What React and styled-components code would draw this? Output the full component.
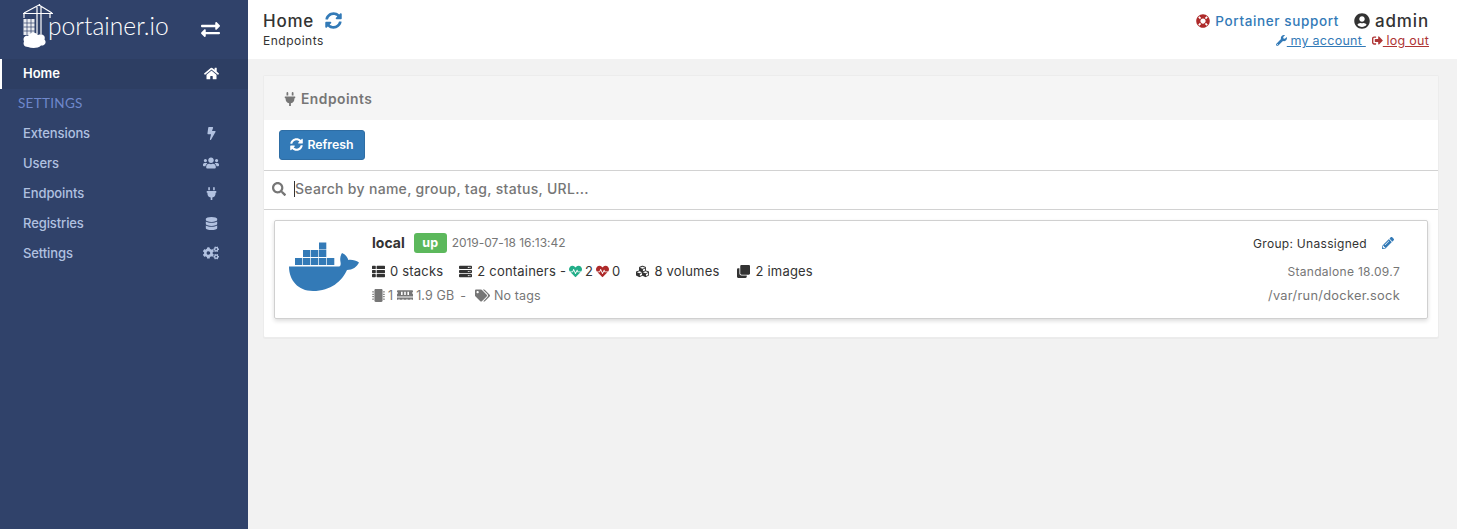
import React from 'react';
import styled, { createGlobalStyle } from 'styled-components';
import {
  FaHome, FaBolt, FaUsers, FaPlug, FaDatabase, FaCogs, FaSyncAlt, FaSearch, FaExchangeAlt,
  FaLifeRing, FaUserCircle, FaWrench, FaSignOutAlt, FaThList, FaServer, FaHeartbeat,
  FaCubes, FaClone, FaMicrochip, FaMemory, FaTags, FaPencilAlt,
} from 'react-icons/fa';

const FONT = `"Inter", "Open Sans", "Liberation Sans", sans-serif`;

const Global = createGlobalStyle`
  html, body { margin: 0; padding: 0; height: 100%; background: #f2f2f2; overflow: hidden; }
  body { font-family: ${FONT}; font-size: 13px; color: #333; }
  * { box-sizing: border-box; }
`;

const Page = styled.div`display: flex; width: 1457px; height: 529px;`;

const Sidebar = styled.aside`width: 248px; height: 100%; background: #30426a; flex: none;`;
const Brand = styled.div`
  height: 59px; display: flex; align-items: flex-start; padding-left: 22px; position: relative; color: #fff;
`;
const LogoWord = styled.span`
  font-family: "Lato", sans-serif; font-weight: 300; font-size: 24.6px; line-height: 28px;
  color: #fff; margin: 12px 0 0 -6px;
`;
const Swap = styled.span`margin: 20px 0 0 0; position: absolute; left: 201px; display: flex; font-size: 19px;`;
const NavRow = styled.div`
  height: 30px; display: flex; align-items: center; justify-content: space-between;
  padding: 0 29px 2px ${p => (p.$active ? 21 : 23)}px;
  font-size: 13px; font-weight: ${p => (p.$active ? 600 : 500)};
  letter-spacing: ${p => (p.$active ? '0' : '-.1px')};
  color: ${p => (p.$active ? '#fff' : '#b1c1e0')};
  background: ${p => (p.$active ? '#2d3e63' : 'transparent')};
  border-left: ${p => (p.$active ? '2px solid #fff' : 'none')};
`;
const NavIcon = styled.span`display: flex; width: 16px; justify-content: center; font-size: 15px;`;
const NavTitle = styled.div`
  height: 30px; display: flex; align-items: center; padding: 0 0 2px 18px;
  font-family: "Lato", sans-serif; font-size: 13.5px; color: #6f88cc; letter-spacing: .3px;
`;

const Main = styled.main`flex: 1; min-width: 0;`;
const Header = styled.header`
  height: 59px; background: #fff; display: flex; justify-content: space-between;
  padding: 10px 28px 0 15px;
`;
const TitleLine = styled.div`
  display: flex; align-items: center; gap: 11px; font-size: 17px; font-weight: 500; color: #333; height: 21px; letter-spacing: .75px;
`;
const Crumb = styled.div`font-size: 12px; color: #333; margin-top: 2px; line-height: 16px; letter-spacing: .5px;`;
const Right = styled.div`display: flex; flex-direction: column; align-items: flex-end;`;
const RightTop = styled.div`display: flex; align-items: center; height: 21px; gap: 15px;`;
const Support = styled.span`
  display: flex; align-items: center; gap: 5px; color: #337ab7; font-size: 13.5px; font-weight: 500; letter-spacing: .62px;
`;
const Admin = styled.span`display: flex; align-items: center; gap: 5px; font-size: 17px; font-weight: 500; color: #333; letter-spacing: .85px;`;
const RightBottom = styled.div`display: flex; gap: 6px; font-size: 12.5px; margin-top: 2px; line-height: 15px; letter-spacing: .25px;`;
const Lnk = styled.span`
  color: ${p => p.$c}; text-decoration: underline; display: inline-flex; align-items: center; white-space: pre;
`;

const Content = styled.div`padding: 16px 18px 0 15px;`;
const Panel = styled.section`
  height: 263px; background: #fff; border: 1px solid #ececec; border-radius: 2px; box-shadow: 0 1px 1px rgba(0,0,0,.03);
`;
const PanelHead = styled.div`
  height: 44px; background: #f5f5f5; display: flex; align-items: center; gap: 4px;
  padding: 2px 0 0 19px; color: #767676; font-size: 13.8px; font-weight: 600; letter-spacing: .5px;
`;
const Actions = styled.div`height: 51px; padding-top: 10px; border-bottom: 1px solid #d2d2d2;`;
const RefreshBtn = styled.button`
  margin-left: 15px; width: 86px; height: 30px; background: #337ab7; border: 1px solid #2e6da4; border-radius: 3px;
  color: #fff; font: 600 12.3px ${FONT}; display: inline-flex; align-items: center; justify-content: center; gap: 4px; padding: 0 0 2px;
`;
const SearchRow = styled.div`
  height: 39px; border-bottom: 1px solid #d2d2d2; display: flex; align-items: center; padding: 0 0 3px 8px;
  color: #767676; font-size: 14px; font-weight: 500; letter-spacing: .3px;
`;
const Caret = styled.span`width: 1px; height: 16px; background: #333; margin: 0 0 0 8px;`;
const Card = styled.article`
  margin: 10px 10px 0 10px; height: 99px; border: 1px solid #d0d0d0; border-radius: 2px;
  box-shadow: 0 2px 4px rgba(0,0,0,.14); display: flex; padding-left: 14px;
`;
const Whale = styled.div`width: 71px; margin-right: 12px; padding-top: 21px; flex: none;`;
const Info = styled.div`flex: 1; display: flex; flex-direction: column;`;
const Line = styled.div`display: flex; align-items: center; height: ${p => p.$h}px; margin-top: ${p => p.$mt || 0}px; font-size: ${p => p.$s || 13}px; color: ${p => p.$c || '#333'}; letter-spacing: ${p => p.$ls ?? 0.2}px;`;
const Name = styled.span`font-size: 14px; font-weight: 700; color: #333; letter-spacing: 0; margin-top: -2px;`;
const Badge = styled.span`
  margin: 0 5px 0 9px; width: 33px; height: 20px; background: #5cb85c; border-radius: 3px; color: #fff;
  font-size: 12.5px; font-weight: 700; display: flex; align-items: center; justify-content: center; padding-bottom: 1px;
`;
const Stamp = styled.span`color: #767676; font-size: 12px; letter-spacing: -.05px; margin-top: -1px;`;
const Stat = styled.span`display: inline-flex; align-items: center; gap: ${p => p.$g ?? 5}px; margin-left: ${p => p.$ml || 0}px; white-space: pre;`;
const Side = styled.div`width: 172px; margin-right: 27px; display: flex; flex-direction: column; align-items: flex-end; flex: none;`;
const SideLine = styled.div`height: ${p => p.$h}px; margin-top: ${p => p.$mt || 0}px; display: flex; align-items: center; font-size: ${p => p.$s || 12}px; color: ${p => p.$c}; letter-spacing: .3px; white-space: pre;`;

const DockerWhale = () => (
  <svg width="71" height="52" viewBox="0 0 71 52">
    <g fill="#337ab7">
      <rect x="6" y="16" width="7.3" height="7" /><rect x="14" y="16" width="7.3" height="7" /><rect x="22" y="16" width="7.3" height="7" /><rect x="30" y="16" width="7.3" height="7" /><rect x="38" y="16" width="7.3" height="7" />
      <rect x="14" y="8" width="7.3" height="7" /><rect x="22" y="8" width="7.3" height="7" /><rect x="30" y="8" width="7.3" height="7" />
      <rect x="30" y="0.5" width="7.3" height="7" />
      <path d="M0 24.5H50C51.5 24.5 52 22.5 51.5 20 50.8 16.5 51.3 13.5 53 11 56.5 12.5 58.5 15 59.3 18 63 17.5 67 18.5 70 20.5 68 25 63.5 28 58 28 53 39 42 49 24 49 9 49 0 38 0 24.5Z" />
    </g>
  </svg>
);

const PortainerLogo = () => (
  <svg width="32" height="50" viewBox="0 0 32 50" style={{ marginTop: 2 }} fill="none">
    <g stroke="#fff" strokeWidth="1.2">
      <path d="M1 11.5H31M17 3L2 11M17 3L30 11M15 5V32M19 4V32M17.5 4V2" />
      <path d="M2 12V16M28 12V16" />
    </g>
    <rect x="1.5" y="17" width="11" height="16" fill="#fff" opacity=".9" />
    <g stroke="#30426a" strokeWidth=".7"><path d="M5 17V33M9 17V33M1.5 21H13M1.5 25H13M1.5 29H13" /></g>
    <path d="M6 45C2 45 .8 42 2 39.5 .5 36 3 33 6 34 8 30 14 30 16 33 20 31 24 34 22.5 37.5 25 40 23 44 19 43.5 16 46.5 10 46.5 6 45Z" fill="#fff" />
  </svg>
);

export default function App() {
  return (
    <>
      <Global />
      <Page>
        <Sidebar>
          <Brand>
            <PortainerLogo />
            <LogoWord>portainer.io</LogoWord>
            <Swap><FaExchangeAlt /></Swap>
          </Brand>
          <NavRow $active>Home<NavIcon><FaHome /></NavIcon></NavRow>
          <NavTitle>SETTINGS</NavTitle>
          <NavRow>Extensions<NavIcon><FaBolt size={13} /></NavIcon></NavRow>
          <NavRow>Users<NavIcon><FaUsers size={16} /></NavIcon></NavRow>
          <NavRow>Endpoints<NavIcon><FaPlug size={13} /></NavIcon></NavRow>
          <NavRow>Registries<NavIcon><FaDatabase size={13} /></NavIcon></NavRow>
          <NavRow>Settings<NavIcon><FaCogs size={16} /></NavIcon></NavRow>
        </Sidebar>
        <Main>
          <Header>
            <div>
              <TitleLine>Home <FaSyncAlt size={17} color="#337ab7" /></TitleLine>
              <Crumb>Endpoints</Crumb>
            </div>
            <Right>
              <RightTop>
                <Support><FaLifeRing size={14} color="#ae2a2a" />Portainer support</Support>
                <Admin><FaUserCircle size={16} />admin</Admin>
              </RightTop>
              <RightBottom>
                <Lnk $c="#337ab7"><FaWrench size={11} /> my account </Lnk>
                <Lnk $c="#ae3535"><FaSignOutAlt size={11} /> log out</Lnk>
              </RightBottom>
            </Right>
          </Header>
          <Content>
            <Panel>
              <PanelHead><FaPlug size={14} />Endpoints</PanelHead>
              <Actions><RefreshBtn><FaSyncAlt size={13} />Refresh</RefreshBtn></Actions>
              <SearchRow><FaSearch size={14} /><Caret />Search by name, group, tag, status, URL...</SearchRow>
              <Card>
                <Whale><DockerWhale /></Whale>
                <Info>
                  <Line $h={20} $mt={12}>
                    <Name>local</Name><Badge>up</Badge>
                    <Stamp>2019-07-18 16:13:42</Stamp>
                  </Line>
                  <Line $h={20} $mt={8}>
                    <Stat><FaThList size={13} />0 stacks</Stat>
                    <Stat $ml={16}><FaServer size={13} />2 containers - </Stat>
                    <Stat $g={3} $ml={-1}><FaHeartbeat size={13} color="#23ae89" />2</Stat>
                    <Stat $g={3} $ml={3}><FaHeartbeat size={13} color="#ae2a2a" />0</Stat>
                    <Stat $ml={16}><FaCubes size={13} />8 volumes</Stat>
                    <Stat $ml={18}><FaClone size={13} />2 images</Stat>
                  </Line>
                  <Line $h={20} $mt={4} $c="#767676" $s={12.5} $ls={0.1}>
                    <Stat $g={3}><FaMicrochip size={13} />1</Stat>
                    <Stat $g={3} $ml={4}><FaMemory size={16} />1.9 GB</Stat>
                    <Stat $ml={6}>-</Stat>
                    <Stat $ml={9} $g={4}><FaTags size={15} />No tags</Stat>
                  </Line>
                </Info>
                <Side>
                  <SideLine $h={20} $mt={12} $c="#333">Group: Unassigned<FaPencilAlt size={12} color="#337ab7" style={{ marginLeft: 15, marginRight: 6 }} /></SideLine>
                  <SideLine $h={20} $mt={8} $c="#767676">Standalone 18.09.7</SideLine>
                  <SideLine $h={20} $mt={4} $c="#767676" $s={12.8}>/var/run/docker.sock</SideLine>
                </Side>
              </Card>
            </Panel>
          </Content>
        </Main>
      </Page>
    </>
  );
}
